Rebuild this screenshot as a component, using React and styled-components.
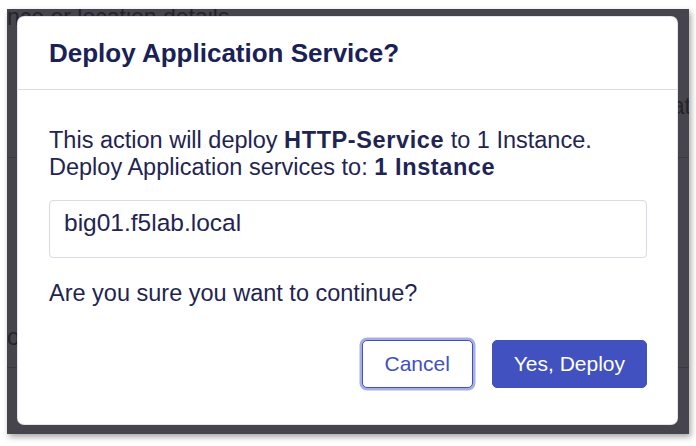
import React from 'react';
import styled, { createGlobalStyle } from 'styled-components';

const GlobalStyle = createGlobalStyle`
  html, body {
    margin: 0;
    padding: 0;
    background: #ffffff;
  }
  body {
    font-family: "Liberation Sans", Arial, Helvetica, sans-serif;
    -webkit-font-smoothing: antialiased;
  }
`;

const Page = styled.div`
  padding: 9px 7px;
  width: 696px;
  height: 446px;
  box-sizing: border-box;
`;

const Frame = styled.div`
  display: grid;
  width: 682px;
  height: 425px;
  overflow: hidden;
  background: #46454d;
  box-shadow: 2px 3px 6px rgba(0, 0, 0, 0.35);
`;

const Behind = styled.div`
  grid-area: 1 / 1;
  display: flex;
  flex-direction: column;
  color: #24232b;
  font-size: 23px;
  line-height: 27px;
`;

const BehindText = styled.div`
  margin-top: ${(p) => p.$top}px;
  height: 27px;
  white-space: nowrap;
  text-align: ${(p) => (p.$right ? 'right' : 'left')};
  margin-right: ${(p) => (p.$right ? -2 : 0)}px;
`;

const BehindRule = styled.div`
  margin-top: ${(p) => p.$top}px;
  height: 1px;
  background: #3b3a42;
`;

const Modal = styled.div`
  grid-area: 1 / 1;
  margin: 8px 12px 10px 11px;
  display: flex;
  flex-direction: column;
  background: #ffffff;
  border-radius: 6px;
  box-shadow: 0 0 0 1px #e2e4ee;
  color: #1d2354;
`;

const Header = styled.div`
  height: 72px;
  display: flex;
  align-items: center;
  padding: 0 31px;
  border-bottom: 1px solid #dcdce3;
`;

const Title = styled.h2`
  margin: 0;
  font-size: 26px;
  font-weight: 700;
  color: #1a2156;
`;

const Body = styled.div`
  display: flex;
  flex-direction: column;
  padding: 37px 30px 36px 31px;
  font-size: 23.5px;
  line-height: 27px;
`;

const Message = styled.p`
  margin: 0;
  color: #1f2552;
  b {
    font-weight: 700;
    letter-spacing: 0.6px;
  }
`;

const Field = styled.div`
  margin-top: 19px;
  height: 58px;
  box-sizing: border-box;
  padding: 8px 14px;
  border: 1px solid #d9dae4;
  border-radius: 4px;
  font-size: 24.5px;
  color: #1f2552;
`;

const Question = styled.p`
  margin: 22px 0 0;
  color: #1f2552;
`;

const Actions = styled.div`
  margin-top: 33px;
  display: flex;
  justify-content: flex-end;
  gap: 19px;
`;

const Button = styled.button`
  height: 48px;
  padding: 0 21px;
  border-radius: 5px;
  font-family: inherit;
  font-size: 21px;
  cursor: pointer;
  border: 1px solid #4150bf;
  background: ${(p) => (p.$primary ? '#4151c0' : '#ffffff')};
  color: ${(p) => (p.$primary ? '#ffffff' : '#4150bf')};
  box-shadow: ${(p) => (p.$focused ? '0 0 0 2.5px #a7aee4' : 'none')};
  min-width: ${(p) => (p.$primary ? 155 : 111)}px;
`;

export default function App() {
  return (
    <Page>
      <GlobalStyle />
      <Frame>
        <Behind>
          <BehindText $top={-5}>nce or location details</BehindText>
          <BehindText $top={62} $right>Stat</BehindText>
          <BehindRule $top={37} />
          <BehindText $top={166}>ocation</BehindText>
          <BehindRule $top={16} />
        </Behind>
        <Modal>
          <Header>
            <Title>Deploy Application Service?</Title>
          </Header>
          <Body>
            <Message>
              This action will deploy <b>HTTP-Service</b> to 1 Instance.
              <br />
              Deploy Application services to: <b>1 Instance</b>
            </Message>
            <Field>big01.f5lab.local</Field>
            <Question>Are you sure you want to continue?</Question>
            <Actions>
              <Button $focused>Cancel</Button>
              <Button $primary>Yes, Deploy</Button>
            </Actions>
          </Body>
        </Modal>
      </Frame>
    </Page>
  );
}
